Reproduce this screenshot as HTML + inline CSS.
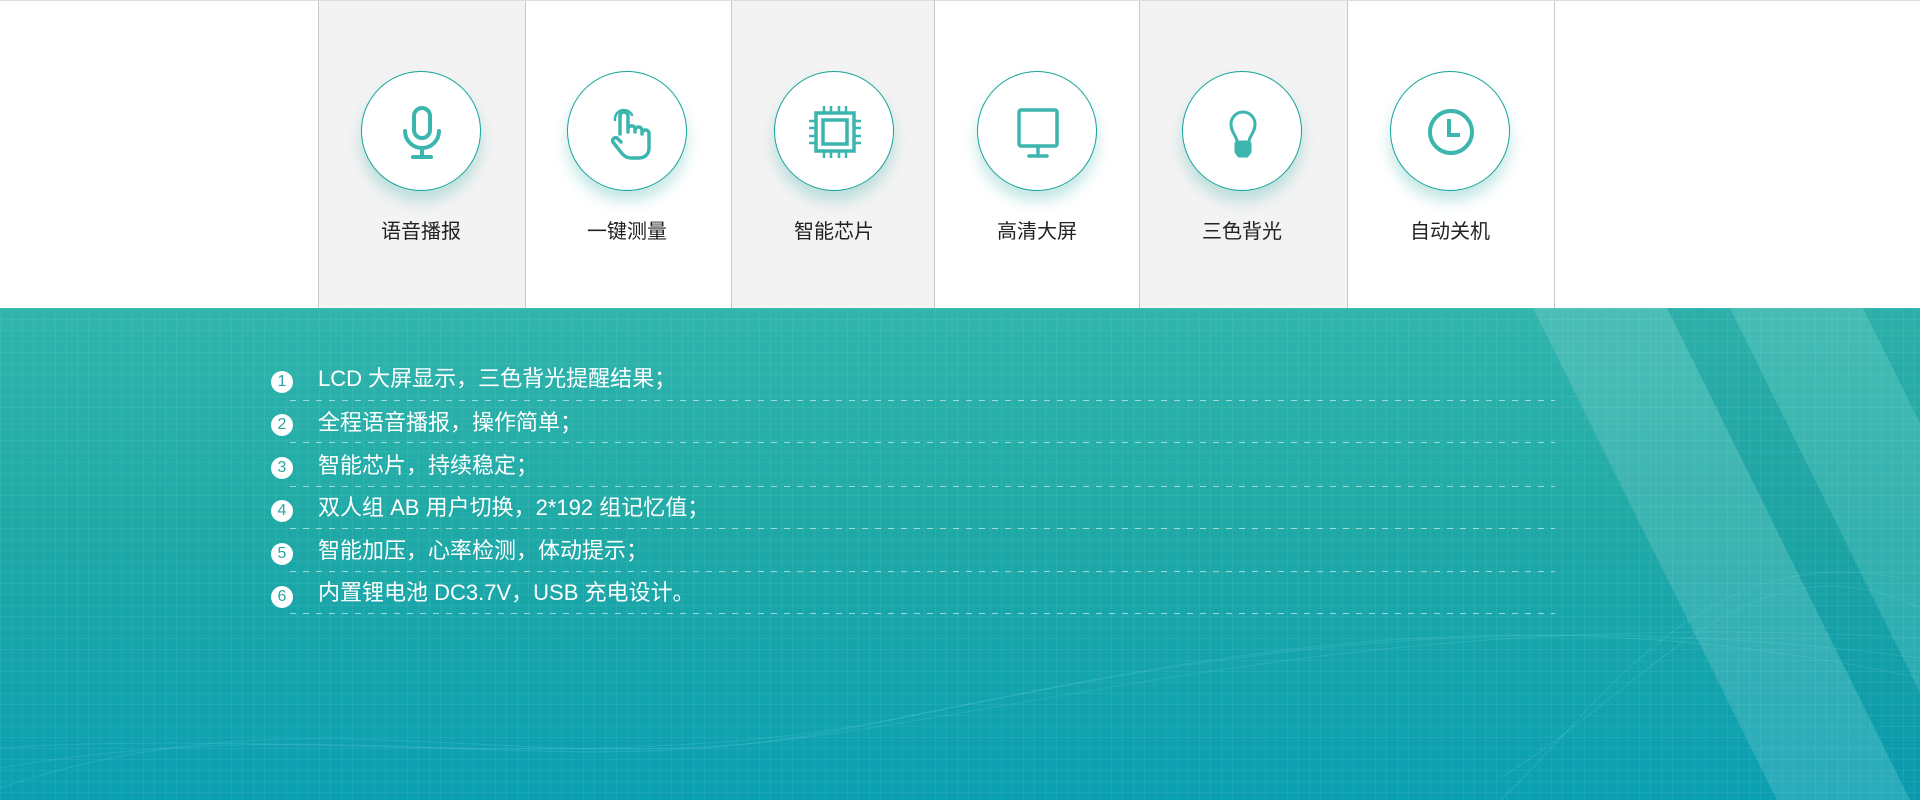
<!DOCTYPE html>
<html><head><meta charset="utf-8"><style>
*{margin:0;padding:0;box-sizing:border-box}
body{width:1920px;height:800px;overflow:hidden;font-family:"Liberation Sans","Noto Sans CJK SC",sans-serif;background:#fff;position:relative}
.top{position:absolute;left:0;top:0;width:1920px;height:308px;background:#fff;border-top:1px solid #ddd}
.col{position:absolute;top:0;height:308px;border-left:1px solid #c8c8c8}
.g{background:#f3f3f3}
.circ{position:absolute;top:70px;width:120px;height:120px;border-radius:50%;border:1px solid #17a398;background:#fff;box-shadow:0 10px 14px rgba(40,170,160,.28);margin-left:-60px}
.circ svg{position:absolute;left:30px;top:30px}
.lab{position:absolute;top:214px;width:200px;margin-left:-100px;text-align:center;font-size:20px;color:#222}
.bot{position:absolute;left:0;top:308px;width:1920px;height:492px;overflow:hidden;background:linear-gradient(180deg,#31b5ad 0%,#1fa9a6 45%,#0b9fb2 100%)}
.grid{position:absolute;inset:0;background-image:linear-gradient(rgba(255,255,255,.06) 1px,transparent 1px),linear-gradient(90deg,rgba(255,255,255,.06) 1px,transparent 1px);background-size:11px 11px}
.item{position:absolute;left:318px;font-size:22px;color:#fff;line-height:26px;white-space:nowrap}
.num{position:absolute;left:271px;width:22px;height:22px;border-radius:50%;background:#fff;color:#2aa7a7;font-size:16px;text-align:center;line-height:22px}
.dash{position:absolute;left:290px;width:1265px;height:1px;background:repeating-linear-gradient(90deg,rgba(255,255,255,.55) 0 6px,transparent 6px 13px)}
</style></head><body>
<div class="top">
<div class="col g" style="left:318px;width:207px"></div>
<div class="col" style="left:525px;width:206px"></div>
<div class="col g" style="left:731px;width:203px"></div>
<div class="col" style="left:934px;width:205px"></div>
<div class="col g" style="left:1139px;width:208px"></div>
<div class="col" style="left:1347px;width:207px"></div>
<div class="col" style="left:1554px;width:1px"></div>

<div class="circ" style="left:421px"><svg width="60" height="60" viewBox="0 0 60 60" fill="none" stroke="#3bb5ad" stroke-width="4" stroke-linecap="round"><rect x="22" y="6" width="16" height="30" rx="8"/><path d="M13 29a17 17 0 0 0 34 0M30 46v8M21 55h18"/></svg></div>
<div class="circ" style="left:627px"><svg width="60" height="60" viewBox="0 0 60 60" fill="none" stroke="#3bb5ad" stroke-width="3.5" stroke-linecap="round" stroke-linejoin="round"><path d="M22 32V14a4 4 0 0 1 8 0v16M30 26a4 4 0 0 1 7 0v4M37 28a3.5 3.5 0 0 1 7 1v3M44 31a3.5 3.5 0 0 1 7 1v14c0 6-4 10-10 10h-8c-5 0-8-3-11-7l-7-9a3 3 0 0 1 4-4l4 4"/><path d="M17 18a9 9 0 0 1 17-5" stroke-width="2.5"/></svg></div>
<div class="circ" style="left:834px"><svg width="60" height="60" viewBox="0 0 60 60" fill="none" stroke="#3bb5ad" stroke-width="3.5"><rect x="11" y="11" width="38" height="38"/><rect x="18" y="18" width="24" height="24"/><path d="M19 4v7M26 4v7M34 4v7M41 4v7M19 49v7M26 49v7M34 49v7M41 49v7M4 19h7M4 26h7M4 34h7M4 41h7M49 19h7M49 26h7M49 34h7M49 41h7" stroke-width="2.5"/></svg></div>
<div class="circ" style="left:1037px"><svg width="60" height="60" viewBox="0 0 60 60" fill="none" stroke="#3bb5ad" stroke-width="3.5" stroke-linecap="round"><rect x="11" y="8" width="38" height="36" rx="2"/><path d="M30 44v10M21 54h18"/></svg></div>
<div class="circ" style="left:1242px"><svg width="60" height="60" viewBox="0 0 60 60" fill="none" stroke="#3bb5ad" stroke-width="3"><path d="M24 40c0-6-6-9-6-18a12 12 0 0 1 24 0c0 9-6 12-6 18z"/><path d="M23 42h14v8l-3 4h-8l-3-4z" fill="#3bb5ad"/></svg></div>
<div class="circ" style="left:1450px"><svg width="60" height="60" viewBox="0 0 60 60" fill="none" stroke="#3bb5ad" stroke-width="4"><circle cx="30" cy="30" r="21"/><path d="M28 17v16h11"/></svg></div>

<div class="lab" style="left:421px">语音播报</div>
<div class="lab" style="left:627px">一键测量</div>
<div class="lab" style="left:834px">智能芯片</div>
<div class="lab" style="left:1037px">高清大屏</div>
<div class="lab" style="left:1242px">三色背光</div>
<div class="lab" style="left:1450px">自动关机</div>
</div>

<div class="bot">
<svg width="1920" height="492" style="position:absolute;left:0;top:0">
<polygon points="1533,0 1667,0 1910,492 1777,492" fill="rgba(255,255,255,.13)"/>
<polygon points="1667,0 1730,0 1973,492 1910,492" fill="rgba(0,80,120,.06)"/>
<polygon points="1730,0 1863,0 2106,492 1973,492" fill="rgba(255,255,255,.1)"/>
<polygon points="1863,0 1920,0 1920,115" fill="rgba(0,80,120,.05)"/>
<g fill="none" stroke="rgba(120,220,240,.18)" stroke-width="1">
<path d="M0 480C300 380 500 470 800 430S1400 300 1920 330"/>
<path d="M0 460C350 400 550 480 850 420S1450 290 1920 350"/>
<path d="M0 440C300 420 600 470 900 410S1500 280 1920 370"/>
<path d="M1500 492C1600 400 1700 230 1900 270"/>
<path d="M1500 470C1650 380 1750 220 1920 300"/>
</g>
</svg>
<div class="grid"></div>
</div>

<div class="num" style="top:371px">1</div><div class="item" style="top:366px">LCD 大屏显示，三色背光提醒结果；</div><div class="dash" style="top:400px"></div>
<div class="num" style="top:414px">2</div><div class="item" style="top:410px">全程语音播报，操作简单；</div><div class="dash" style="top:442px"></div>
<div class="num" style="top:457px">3</div><div class="item" style="top:453px">智能芯片，持续稳定；</div><div class="dash" style="top:486px"></div>
<div class="num" style="top:500px">4</div><div class="item" style="top:495px">双人组 AB 用户切换，2*192 组记忆值；</div><div class="dash" style="top:528px"></div>
<div class="num" style="top:543px">5</div><div class="item" style="top:538px">智能加压，心率检测，体动提示；</div><div class="dash" style="top:571px"></div>
<div class="num" style="top:586px">6</div><div class="item" style="top:580px">内置锂电池 DC3.7V，USB 充电设计。</div><div class="dash" style="top:613px"></div>
</body></html>
